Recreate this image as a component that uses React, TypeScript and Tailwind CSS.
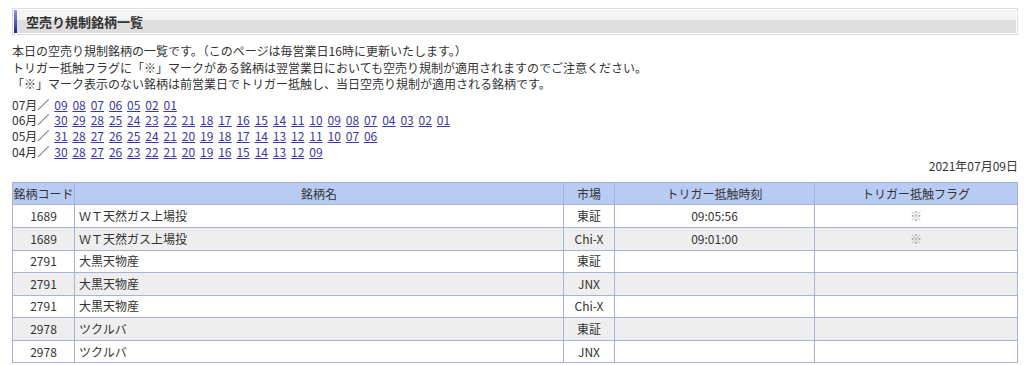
import React from "react";

// Regulation list data
const months: Array<{ label: string; days: string[] }> = [
  { label: "07月", days: ["09", "08", "07", "06", "05", "02", "01"] },
  { label: "06月", days: ["30", "29", "28", "25", "24", "23", "22", "21", "18", "17", "16", "15", "14", "11", "10", "09", "08", "07", "04", "03", "02", "01"] },
  { label: "05月", days: ["31", "28", "27", "26", "25", "24", "21", "20", "19", "18", "17", "14", "13", "12", "11", "10", "07", "06"] },
  { label: "04月", days: ["30", "28", "27", "26", "23", "22", "21", "20", "19", "16", "15", "14", "13", "12", "09"] },
];

const rows = [
  { code: "1689", name: "ＷＴ天然ガス上場投", market: "東証", time: "09:05:56", flag: "※" },
  { code: "1689", name: "ＷＴ天然ガス上場投", market: "Chi-X", time: "09:01:00", flag: "※" },
  { code: "2791", name: "大黒天物産", market: "東証", time: "", flag: "" },
  { code: "2791", name: "大黒天物産", market: "JNX", time: "", flag: "" },
  { code: "2791", name: "大黒天物産", market: "Chi-X", time: "", flag: "" },
  { code: "2978", name: "ツクルバ", market: "東証", time: "", flag: "" },
  { code: "2978", name: "ツクルバ", market: "JNX", time: "", flag: "" },
];

export default function App() {
  return (
    <div className="min-h-screen bg-white pl-3 pr-[6px] pt-[8px] text-[12px] leading-[16px] text-[#333] font-['Noto_Sans_CJK_JP','Noto_Sans',sans-serif]">
      {/* Title bar */}
      <div className="border border-[#dcdde6] p-px">
        <div className="flex items-stretch bg-[linear-gradient(to_bottom,#f4f4f4_0%,#f4f4f4_45%,#dedede_45%,#dedede_100%)]">
          <div className="w-[3px] bg-[linear-gradient(to_bottom,#8d9bd8,#1e2a8c)]" />
          <h1 className="py-[3px] pl-[9px] text-[13px] font-bold leading-[17px] text-[#333]">空売り規制銘柄一覧</h1>
        </div>
      </div>

      {/* Notes */}
      <div className="mt-[8px] leading-[16.5px]">
        <p>本日の空売り規制銘柄の一覧です。（このページは毎営業日16時に更新いたします。）</p>
        <p>トリガー抵触フラグに「※」マークがある銘柄は翌営業日においても空売り規制が適用されますのでご注意ください。</p>
        <p>「※」マーク表示のない銘柄は前営業日でトリガー抵触し、当日空売り規制が適用される銘柄です。</p>
      </div>

      {/* Month links */}
      <div className="mt-[4px] leading-[15.7px] [word-spacing:2.2px]">
        {months.map((m) => (
          <div key={m.label}>
            <span>{m.label}／ </span>
            {m.days.map((d, i) => (
              <React.Fragment key={d + i}>
                <a href="#" className="text-[#3838a8] underline">{d}</a>
                {i < m.days.length - 1 ? " " : ""}
              </React.Fragment>
            ))}
          </div>
        ))}
      </div>

      <div className="-mt-[1px] text-right">2021年07月09日</div>

      {/* Table */}
      <table className="mt-[8px] w-full border-collapse border border-[#a9b1d4]">
        <thead>
          <tr className="bg-[#b8cbf3] h-[22px]">
            <th className="w-[62px] border border-[#a9b1d4] px-0 font-normal whitespace-nowrap">銘柄コード</th>
            <th className="border border-[#a9b1d4] font-normal">銘柄名</th>
            <th className="w-[51px] border border-[#a9b1d4] font-normal">市場</th>
            <th className="w-[200px] border border-[#a9b1d4] font-normal">トリガー抵触時刻</th>
            <th className="w-[203px] border border-[#a9b1d4] font-normal">トリガー抵触フラグ</th>
          </tr>
        </thead>
        <tbody>
          {rows.map((r, i) => (
            <tr key={i} className={`h-[22.6px] ${i % 2 === 1 ? "bg-[#eeeeee]" : "bg-white"}`}>
              <td className="border border-[#a9b1d4] text-center">{r.code}</td>
              <td className="border border-[#a9b1d4] pl-[4px]">{r.name}</td>
              <td className="border border-[#a9b1d4] text-center">{r.market}</td>
              <td className="border border-[#a9b1d4] text-center">{r.time}</td>
              <td className="border border-[#a9b1d4] text-center text-[#999]">{r.flag}</td>
            </tr>
          ))}
        </tbody>
      </table>
    </div>
  );
}
